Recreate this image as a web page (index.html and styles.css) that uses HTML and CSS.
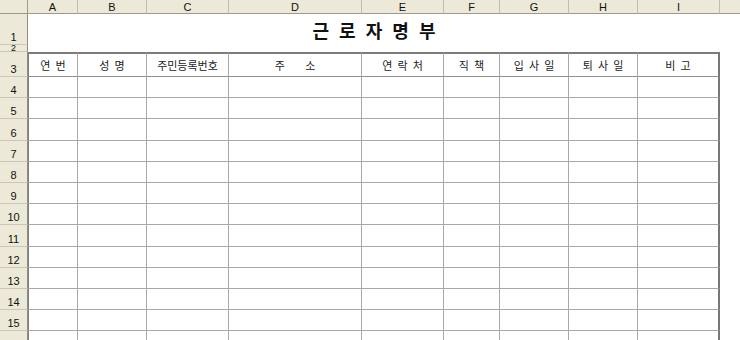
FILE: index.html
```html
<!DOCTYPE html>
<html lang="ko">
<head>
<meta charset="utf-8">
<title>근로자명부</title>
<link rel="stylesheet" href="styles.css">
</head>
<body>
<div class="sheet">
  <div class="ch corner"></div>
  <div class="ch">A</div><div class="ch">B</div><div class="ch">C</div><div class="ch">D</div><div class="ch">E</div><div class="ch">F</div><div class="ch">G</div><div class="ch">H</div><div class="ch">I</div><div class="ch last"></div>

  <div class="rh">1</div><div class="title">근 로 자 명 부</div><div class="j"></div>
  <div class="rh r2">2</div><div class="gap"></div>

  <div class="rh">3</div>
  <div class="c a h">연 번</div><div class="c h">성 명</div><div class="c h">주민등록번호</div><div class="c h pre">주    소</div><div class="c h">연 락 처</div><div class="c h">직 책</div><div class="c h">입 사 일</div><div class="c h">퇴 사 일</div><div class="c i h">비 고</div><div class="j"></div>

  <div class="rh">4</div><div class="c a"></div><div class="c"></div><div class="c"></div><div class="c"></div><div class="c"></div><div class="c"></div><div class="c"></div><div class="c"></div><div class="c i"></div><div class="j"></div>
  <div class="rh">5</div><div class="c a"></div><div class="c"></div><div class="c"></div><div class="c"></div><div class="c"></div><div class="c"></div><div class="c"></div><div class="c"></div><div class="c i"></div><div class="j"></div>
  <div class="rh">6</div><div class="c a"></div><div class="c"></div><div class="c"></div><div class="c"></div><div class="c"></div><div class="c"></div><div class="c"></div><div class="c"></div><div class="c i"></div><div class="j"></div>
  <div class="rh">7</div><div class="c a"></div><div class="c"></div><div class="c"></div><div class="c"></div><div class="c"></div><div class="c"></div><div class="c"></div><div class="c"></div><div class="c i"></div><div class="j"></div>
  <div class="rh">8</div><div class="c a"></div><div class="c"></div><div class="c"></div><div class="c"></div><div class="c"></div><div class="c"></div><div class="c"></div><div class="c"></div><div class="c i"></div><div class="j"></div>
  <div class="rh">9</div><div class="c a"></div><div class="c"></div><div class="c"></div><div class="c"></div><div class="c"></div><div class="c"></div><div class="c"></div><div class="c"></div><div class="c i"></div><div class="j"></div>
  <div class="rh">10</div><div class="c a"></div><div class="c"></div><div class="c"></div><div class="c"></div><div class="c"></div><div class="c"></div><div class="c"></div><div class="c"></div><div class="c i"></div><div class="j"></div>
  <div class="rh">11</div><div class="c a"></div><div class="c"></div><div class="c"></div><div class="c"></div><div class="c"></div><div class="c"></div><div class="c"></div><div class="c"></div><div class="c i"></div><div class="j"></div>
  <div class="rh">12</div><div class="c a"></div><div class="c"></div><div class="c"></div><div class="c"></div><div class="c"></div><div class="c"></div><div class="c"></div><div class="c"></div><div class="c i"></div><div class="j"></div>
  <div class="rh">13</div><div class="c a"></div><div class="c"></div><div class="c"></div><div class="c"></div><div class="c"></div><div class="c"></div><div class="c"></div><div class="c"></div><div class="c i"></div><div class="j"></div>
  <div class="rh">14</div><div class="c a"></div><div class="c"></div><div class="c"></div><div class="c"></div><div class="c"></div><div class="c"></div><div class="c"></div><div class="c"></div><div class="c i"></div><div class="j"></div>
  <div class="rh">15</div><div class="c a"></div><div class="c"></div><div class="c"></div><div class="c"></div><div class="c"></div><div class="c"></div><div class="c"></div><div class="c"></div><div class="c i"></div><div class="j"></div>
  <div class="rh"></div><div class="c a"></div><div class="c"></div><div class="c"></div><div class="c"></div><div class="c"></div><div class="c"></div><div class="c"></div><div class="c"></div><div class="c i"></div><div class="j"></div>
</div>
</body>
</html>
```

FILE: styles.css
```css
html, body {
  margin: 0;
  padding: 0;
  background: #ffffff;
  overflow: hidden;
}

body {
  font-family: "Liberation Sans", Arial, sans-serif;
  color: #000;
}

.sheet {
  display: grid;
  width: 740px;
  height: 340px;
  overflow: hidden;
  grid-template-columns: 28px 50px 69px 82px 133px 82px 56px 69px 69px 82px 1fr;
  grid-template-rows: 14px 31px 7px 25px repeat(13, 21.2px);
}

.ch {
  background: #ece9d8;
  border-right: 1px solid #c0bdae;
  border-bottom: 1px solid #9d9a8c;
  display: flex;
  align-items: center;
  justify-content: center;
  font-size: 11px;
  line-height: 12px;
  color: #111;
  overflow: hidden;
}

.ch.corner {
  border-right-color: #9d9a8c;
}

.ch.last {
  border-right: none;
}

.rh {
  grid-column: 1;
  background: #ece9d8;
  border-right: 1px solid #8f8c80;
  border-bottom: 1px solid #cbc7b8;
  display: flex;
  align-items: flex-end;
  justify-content: center;
  font-size: 11px;
  line-height: 12px;
  padding-bottom: 1px;
  color: #111;
  overflow: hidden;
}

.rh.r2 {
  align-items: center;
  font-size: 9px;
  line-height: 6px;
  padding-bottom: 0;
  overflow: visible;
}

.title {
  grid-column: 2 / 11;
  display: flex;
  align-items: center;
  justify-content: center;
  font-family: "Noto Sans CJK KR", "Noto Sans", sans-serif;
  font-weight: bold;
  font-size: 18px;
  line-height: 20px;
  word-spacing: 5px;
  color: #111;
}

.gap {
  grid-column: 2 / 12;
}

.c {
  border-right: 1px solid #a9a9a9;
  border-bottom: 1px solid #a9a9a9;
}

.c.a {
  border-left: 1px solid #808080;
}

.c.i {
  border-right: 2px solid #777777;
}

.h {
  border-top: 2px solid #7c7c7c;
  border-bottom-color: #8e8e8e;
  display: flex;
  align-items: center;
  justify-content: center;
  font-family: "Noto Sans CJK KR", "Noto Sans", sans-serif;
  font-size: 11px;
  line-height: 13px;
  word-spacing: 2px;
  color: #222;
  padding-top: 1px;
}

.pre {
  white-space: pre;
}
```
